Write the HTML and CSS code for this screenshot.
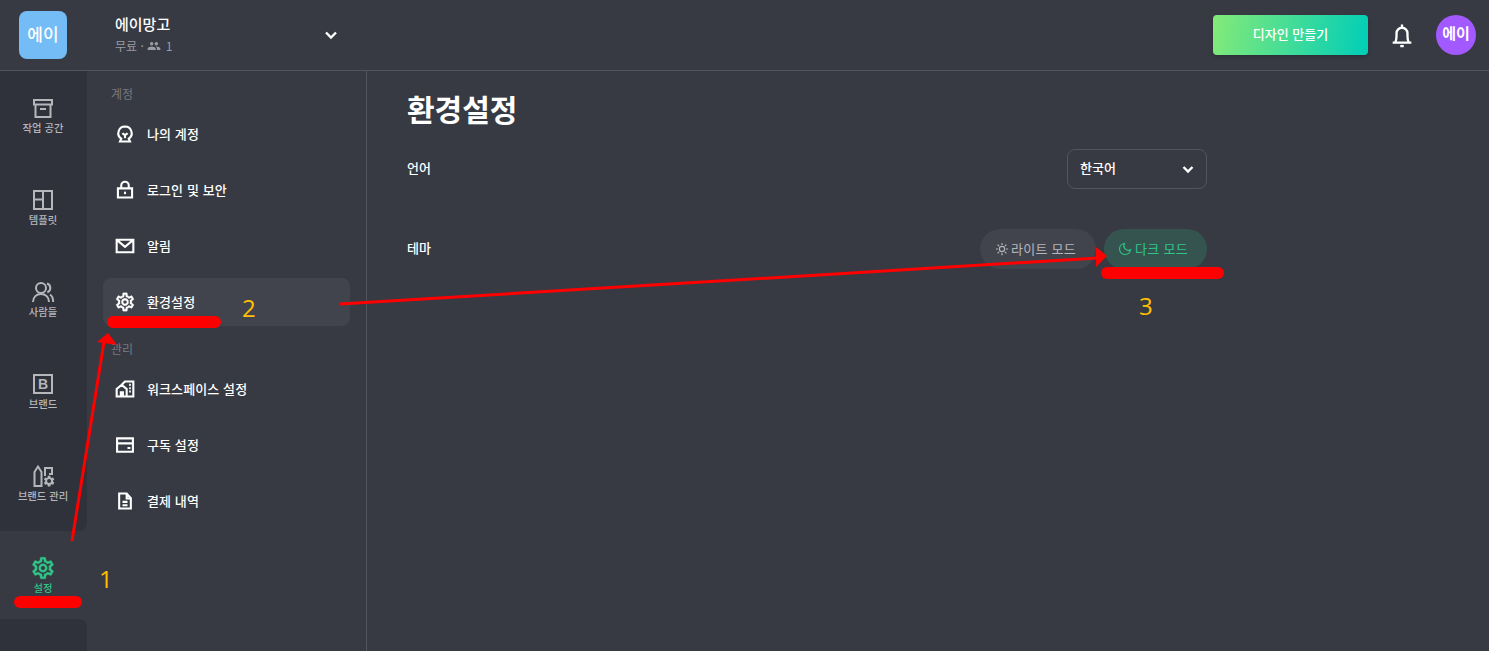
FILE: index.html
```html
<!DOCTYPE html>
<html lang="ko">
<head>
<meta charset="utf-8">
<title>환경설정</title>
<link rel="stylesheet" href="styles.css">
</head>
<body>
<div class="app">
  <header class="topbar">
    <div class="logo-cell"><div class="logo">에이</div></div>
    <div class="workspace">
      <div class="ws-text">
        <div class="ws-name">에이망고</div>
        <div class="ws-sub"><span>무료 ·</span>
          <svg class="ws-people" viewBox="0 0 24 24"><path d="M16 11a3 3 0 1 0 0-6 3 3 0 0 0 0 6zm-8 0a3 3 0 1 0 0-6 3 3 0 0 0 0 6zm0 2c-2.300 0-7 1.200-7 3.500V19h14v-2.500C15 14.200 10.300 13 8 13zm8 0h-1c1.200.9 2 2 2 3.500V19h6v-2.500c0-2.300-4.700-3.500-7-3.500z"/></svg>
          <span class="ws-count">1</span></div>
      </div>
      <svg class="chevron" viewBox="0 0 14 14"><path d="M2 4.500l5 5 5-5"/></svg>
    </div>
    <div class="top-actions">
      <button class="create">디자인 만들기</button>
      <svg class="bell" viewBox="0 0 24 24"><path d="M4 18.500h16M6 18.500c1-1.500 1.300-3 1.300-5.500V10.500a4.700 4.700 0 0 1 9.400 0V13c0 2.500.3 4 1.300 5.500M12 3v2.500"/><path d="M10.500 21.500h3"/></svg>
      <div class="avatar">에이</div>
    </div>
  </header>
  <div class="body-row">
    <nav class="rail">
      <a class="rail-item">
        <svg class="rail-icon" viewBox="0 0 24 24"><path d="M3 4h18v4.500H3zM4.500 8.500V21h15V8.500M9 13h6"/></svg>
        <span>작업 공간</span>
      </a>
      <a class="rail-item">
        <svg class="rail-icon" viewBox="0 0 24 24"><path d="M3 3h18v18H3zM12 3v18M3 11.500h9"/></svg>
        <span>템플릿</span>
      </a>
      <a class="rail-item">
        <svg class="rail-icon" viewBox="0 0 24 24"><circle cx="10" cy="8" r="5"/><path d="M2 22c0-5 3.500-8 8-8s8 3 8 8M16 3.500c2 .7 3.300 2.500 3.300 4.500s-1.200 3.700-3 4.400M19 14.500c2 1.300 3.200 4 3.200 7.500"/></svg>
        <span>사람들</span>
      </a>
      <a class="rail-item">
        <svg class="rail-icon" viewBox="0 0 24 24"><path d="M3 3h18v18H3z"/><text class="icon-letter" x="12" y="17" text-anchor="middle">B</text></svg>
        <span>브랜드</span>
      </a>
      <a class="rail-item rail-before">
        <svg class="rail-icon" viewBox="0 0 24 24"><path d="M3.500 22V8L7 2.500 10.500 8v14zM14 12V4h7v6h-3"/><use href="#gear-solid" transform="translate(11.500 10.500) scale(.55)"/></svg>
        <span>브랜드 관리</span>
      </a>
      <a class="rail-item active">
        <svg class="rail-icon gear-icon" viewBox="0 0 24 24"><use href="#gear"/></svg>
        <span>설정</span>
      </a>
      <div class="rail-fill"></div>
    </nav>
    <aside class="subnav">
      <div class="sub-title first">계정</div>
      <a class="sub-item"><svg class="sub-icon" viewBox="0 0 24 24"><path d="M12 3a8 8 0 0 1 4.500 14.600L18 21H6l1.500-3.400A8 8 0 0 1 12 3z"/><path d="M9 11c.8 1.200 1.800 1.800 3 1.800s2.200-.6 3-1.800"/><path d="M12 13v4"/></svg><span>나의 계정</span></a>
      <a class="sub-item"><svg class="sub-icon" viewBox="0 0 24 24"><path d="M3.500 10h17v11h-17zM7.500 10V6.500a4.500 4.500 0 0 1 9 0V10"/><path d="M12 14v3"/></svg><span>로그인 및 보안</span></a>
      <a class="sub-item"><svg class="sub-icon" viewBox="0 0 24 24"><path d="M2 4.500h20v15H2zM2.500 5l9.500 8 9.500-8"/></svg><span>알림</span></a>
      <a class="sub-item current"><svg class="sub-icon gear-icon" viewBox="0 0 24 24"><use href="#gear"/></svg><span>환경설정</span></a>
      <div class="sub-title">관리</div>
      <a class="sub-item"><svg class="sub-icon" viewBox="0 0 24 24"><path d="M2 21v-9l6-5 6 5v9zM8 7l4-4h10v18h-8M7 21v-5h2.500v5M17 7h2M17 11h2M17 15h2"/></svg><span>워크스페이스 설정</span></a>
      <a class="sub-item"><svg class="sub-icon" viewBox="0 0 24 24"><path d="M2.500 4h19v16h-19zM2.500 10h19M15 15.500h3.500"/></svg><span>구독 설정</span></a>
      <a class="sub-item"><svg class="sub-icon" viewBox="0 0 24 24"><path d="M5 3h9l5 5.500V21H5zM14 3v6h5M9 13h6M9 17h6"/></svg><span>결제 내역</span></a>
    </aside>
    <main class="content">
      <h1 class="title">환경설정</h1>
      <div class="form">
        <div class="form-row lang">
          <label>언어</label>
          <div class="select"><span>한국어</span><svg class="select-chev" viewBox="0 0 14 14"><path d="M2.500 5l4.500 4.500L11.500 5"/></svg></div>
        </div>
        <div class="form-row theme">
          <label>테마</label>
          <div class="modes">
            <div class="mode light"><svg class="mode-icon" viewBox="0 0 24 24"><circle cx="12" cy="12" r="4.500"/><path d="M12 1.500v3.500M12 19v3.500M1.500 12H5M19 12h3.500M4.500 4.500l2.500 2.500M17 17l2.500 2.500M19.500 4.500L17 7M7 17l-2.500 2.500"/></svg><span>라이트 모드</span></div>
            <div class="mode dark"><svg class="mode-icon" viewBox="0 0 24 24"><path d="M11 2.500a9.500 9.500 0 1 0 10.500 11A8 8 0 0 1 11 2.500z"/></svg><span>다크 모드</span></div>
          </div>
        </div>
      </div>
    </main>
  </div>
</div>

<svg class="defs" width="0" height="0"><defs>
  <path id="gear" d="M19.430 12.980c.04-.32.07-.64.07-.98 0-.34-.03-.66-.07-.98l2.110-1.650c.19-.15.24-.42.12-.64l-2-3.460c-.09-.16-.26-.25-.44-.25-.06 0-.12.01-.17.03l-2.490 1c-.52-.4-1.080-.73-1.690-.98l-.38-2.650C14.460 2.180 14.250 2 14 2h-4c-.25 0-.46.18-.49.42l-.38 2.650c-.61.25-1.170.59-1.690.98l-2.490-1c-.06-.02-.12-.03-.18-.03-.17 0-.34.09-.43.25l-2 3.460c-.13.22-.07.49.12.64l2.110 1.650c-.04.32-.07.65-.07.98 0 .33.03.66.07.98l-2.110 1.650c-.19.15-.24.42-.12.64l2 3.460c.09.16.26.25.44.25.06 0 .12-.01.17-.03l2.490-1c.52.4 1.080.73 1.690.98l.38 2.650c.03.24.24.42.49.42h4c.25 0 .46-.18.49-.42l.38-2.650c.61-.25 1.170-.59 1.690-.98l2.490 1c.06.02.12.03.18.03.17 0 .34-.09.43-.25l2-3.460c.12-.22.07-.49-.12-.64l-2.110-1.650zm-1.980-1.710c.04.31.05.52.05.73 0 .21-.02.43-.05.73l-.14 1.130.89.7 1.080.84-.7 1.210-1.270-.51-1.040-.42-.9.68c-.43.32-.84.56-1.250.73l-1.060.43-.16 1.130-.2 1.350h-1.400l-.19-1.350-.16-1.130-1.060-.43c-.43-.18-.83-.41-1.230-.71l-.91-.7-1.060.43-1.270.51-.7-1.210 1.080-.84.89-.7-.14-1.130c-.03-.31-.05-.54-.05-.74s.02-.43.05-.73l.14-1.130-.89-.7-1.080-.84.7-1.210 1.270.51 1.040.42.9-.68c.43-.32.84-.56 1.250-.73l1.060-.43.16-1.130.2-1.350h1.390l.19 1.350.16 1.130 1.060.43c.43.18.83.41 1.230.71l.91.7 1.060-.43 1.270-.51.7 1.210-1.070.85-.89.7.14 1.130zM12 8c-2.210 0-4 1.790-4 4s1.790 4 4 4 4-1.790 4-4-1.790-4-4-4zm0 6c-1.100 0-2-.9-2-2s.9-2 2-2 2 .9 2 2-.9 2-2 2z"/>
  <path id="gear-solid" class="solid" d="M19.140 12.940c.04-.3.06-.61.06-.94 0-.32-.02-.64-.07-.94l2.030-1.580c.18-.14.23-.41.12-.61l-1.920-3.320c-.12-.22-.37-.29-.59-.22l-2.390.96c-.5-.38-1.030-.7-1.620-.94l-.36-2.540c-.04-.24-.24-.41-.48-.41h-3.840c-.24 0-.43.17-.47.41l-.36 2.540c-.59.24-1.130.57-1.620.94l-2.390-.96c-.22-.08-.47 0-.59.22L2.740 8.870c-.12.21-.08.47.12.61l2.030 1.580c-.05.3-.09.63-.09.94s.02.64.07.94l-2.030 1.580c-.18.14-.23.41-.12.61l1.920 3.320c.12.22.37.29.59.22l2.390-.96c.5.38 1.030.7 1.620.94l.36 2.540c.05.24.24.41.48.41h3.840c.24 0 .44-.17.47-.41l.36-2.540c.59-.24 1.130-.56 1.620-.94l2.390.96c.22.08.47 0 .59-.22l1.920-3.320c.12-.22.07-.47-.12-.61l-2.010-1.580zM12 15.600c-1.980 0-3.600-1.620-3.600-3.600s1.620-3.600 3.600-3.600 3.600 1.620 3.600 3.600-1.620 3.600-3.600 3.600z"/>
</defs></svg>

<svg class="marks" viewBox="0 0 1489 651">
  <rect x="14" y="596" width="68" height="12" rx="6"/>
  <rect x="107" y="316" width="114" height="12" rx="6"/>
  <rect x="1101" y="267" width="123" height="12" rx="6"/>
  <path class="mark-line" d="M72 541L104 342"/>
  <path d="M108 333L97 342L117 345z"/>
  <path class="mark-line" d="M340 304L1098 258"/>
  <path d="M1107 256L1096 247L1096 267z"/>
</svg>
<span class="note note-1">1</span>
<span class="note note-2">2</span>
<span class="note note-3">3</span>
</body>
</html>
```
FILE: styles.css
```css
* { box-sizing: border-box; }
html, body { margin: 0; height: 100%; overflow: hidden; }
body {
  background: #373a43;
  color: #fff;
  font-family: "Noto Sans CJK KR", "Noto Sans", sans-serif;
  font-size: 13px;
}
svg { fill: none; stroke: currentColor; stroke-width: 2; flex: none; display: block; }
.app { display: flex; flex-direction: column; height: 651px; }
.topbar {
  height: 71px;
  flex: none;
  display: flex;
  align-items: center;
  border-bottom: 1px solid #53555e;
}
.logo-cell { width: 87px; display: flex; justify-content: center; padding-right: 1px; }
.logo {
  width: 48px; height: 48px; border-radius: 8px;
  background: #74bcf5;
  display: flex; align-items: center; justify-content: center;
  font-size: 17px; font-weight: 500;
  padding-bottom: 4px;
}
.workspace {
  width: 279px;
  padding-left: 28px;
  display: flex; align-items: center;
}
.ws-text { width: 209px; }
.ws-name { font-size: 15px; font-weight: 500; line-height: 20px; margin-bottom: 2px; }
.ws-sub {
  display: flex; align-items: center; gap: 2px;
  font-size: 12px; line-height: 20px; color: #9a9ca3;
}
.ws-people { width: 14px; height: 14px; fill: #9a9ca3; stroke: none; margin-left: 1px; }
.ws-count { margin-left: 3px; }
.chevron { width: 14px; height: 14px; stroke-width: 2.400; }
.top-actions {
  margin-left: auto;
  display: flex; align-items: center;
  padding-right: 13px;
}
.create {
  width: 155px; height: 40px;
  border: 0; border-radius: 4px;
  padding: 0 0 4px;
  background: linear-gradient(100deg, #84ea78 0%, #00ceb8 100%);
  color: #fff;
  font: 500 13px "Noto Sans CJK KR", sans-serif;
  box-shadow: 0 2px 4px rgba(0,0,0,.2);
}
.bell { width: 28px; height: 28px; margin-left: 20px; }
.avatar {
  width: 40px; height: 40px; border-radius: 50%;
  background: #a259ff;
  margin-left: 20px;
  padding-bottom: 5px;
  display: flex; align-items: center; justify-content: center;
  font-size: 15px; font-weight: 700;
}
.body-row { flex: 1; display: flex; min-height: 0; }
.rail { width: 87px; flex: none; display: flex; flex-direction: column; }
.rail-item {
  height: 92px; flex: none;
  background: #2f323b;
  padding: 25px 1px 0 0;
  display: flex; flex-direction: column; align-items: center;
  color: #b6b7bb;
  font-size: 10.300px; line-height: 16px; font-weight: 500;
}
.rail-icon { width: 24px; height: 24px; }
.rail-before { border-bottom-right-radius: 8px; }
.rail-item.active { height: 88px; background: transparent; color: #2ec587; }
.rail-item.active .rail-icon { width: 26px; height: 26px; margin: -1px 0; }
.rail-fill { flex: 1; background: #2f323b; border-top-right-radius: 8px; }
.gear-icon { fill: currentColor; stroke: currentColor; stroke-width: .3; }
.solid { fill: currentColor; stroke: none; }
.icon-letter {
  font-family: "Liberation Sans", sans-serif;
  font-size: 14px; font-weight: 700;
  fill: currentColor; stroke: none;
}
.subnav {
  width: 280px; flex: none;
  padding: 0 16px;
  border-right: 1px solid #53555e;
  display: flex; flex-direction: column; gap: 8px;
}
.sub-title {
  height: 20px; line-height: 20px;
  padding-left: 8px;
  color: #77797f;
  font-size: 12px;
  margin-top: 5px;
  margin-bottom: -2px;
}
.sub-title.first { margin-top: 13px; }
.sub-item {
  height: 48px;
  display: flex; align-items: center; gap: 12px;
  padding-left: 12px;
  border-radius: 8px;
  font-weight: 500;
  letter-spacing: .1px;
}
.sub-item span { padding-bottom: 2px; }
.sub-item.current { background: #41434d; }
.sub-icon { width: 20px; height: 20px; stroke-width: 2.500; }
.sub-icon.gear-icon { stroke-width: .3; width: 22px; height: 22px; margin: 0 -1px; }
.content { flex: 1; padding: 0 0 0 40px; }
.title {
  margin: 14px 0 0;
  font-size: 30px; line-height: 46px; font-weight: 700;
}
.form { width: 800px; margin-top: 18px; }
.form-row {
  display: flex; align-items: center; justify-content: space-between;
  height: 40px;
  font-weight: 500;
}
.form-row label { padding-bottom: 4px; }
.theme { margin-top: 40px; }
.select {
  width: 140px; height: 40px;
  border: 1px solid #53555e; border-radius: 8px;
  display: flex; align-items: center; justify-content: space-between;
  padding: 0 11px 0 12px;
}
.select span { padding-bottom: 4px; }
.select-chev { width: 14px; height: 14px; stroke-width: 2.400; }
.modes { display: flex; gap: 8px; }
.mode {
  height: 40px; border-radius: 20px;
  display: flex; align-items: center; justify-content: center; gap: 2px;
  padding-right: 5px;
  font-weight: 400;
  letter-spacing: .3px;
}
.mode span { padding-bottom: 2px; }
.mode.light { width: 116px; background: #41434d; color: #b6b7bb; }
.mode.dark { width: 103px; background: #36544f; color: #2ec587; gap: 3px; }
.mode-icon { width: 14px; height: 14px; stroke-width: 2; }
.defs { position: absolute; }
.marks { position: absolute; left: 0; top: 0; width: 1489px; height: 651px; fill: #ff0000; stroke: none; pointer-events: none; }
.mark-line { fill: none; stroke: #ff0000; stroke-width: 3; }
.note {
  position: absolute;
  color: #ffc000;
  font-family: "Open Sans", sans-serif;
  font-size: 24px; line-height: 32px;
}
.note-1 { left: 99px; top: 563px; }
.note-2 { left: 242px; top: 292px; }
.note-3 { left: 1139px; top: 290px; }
```
